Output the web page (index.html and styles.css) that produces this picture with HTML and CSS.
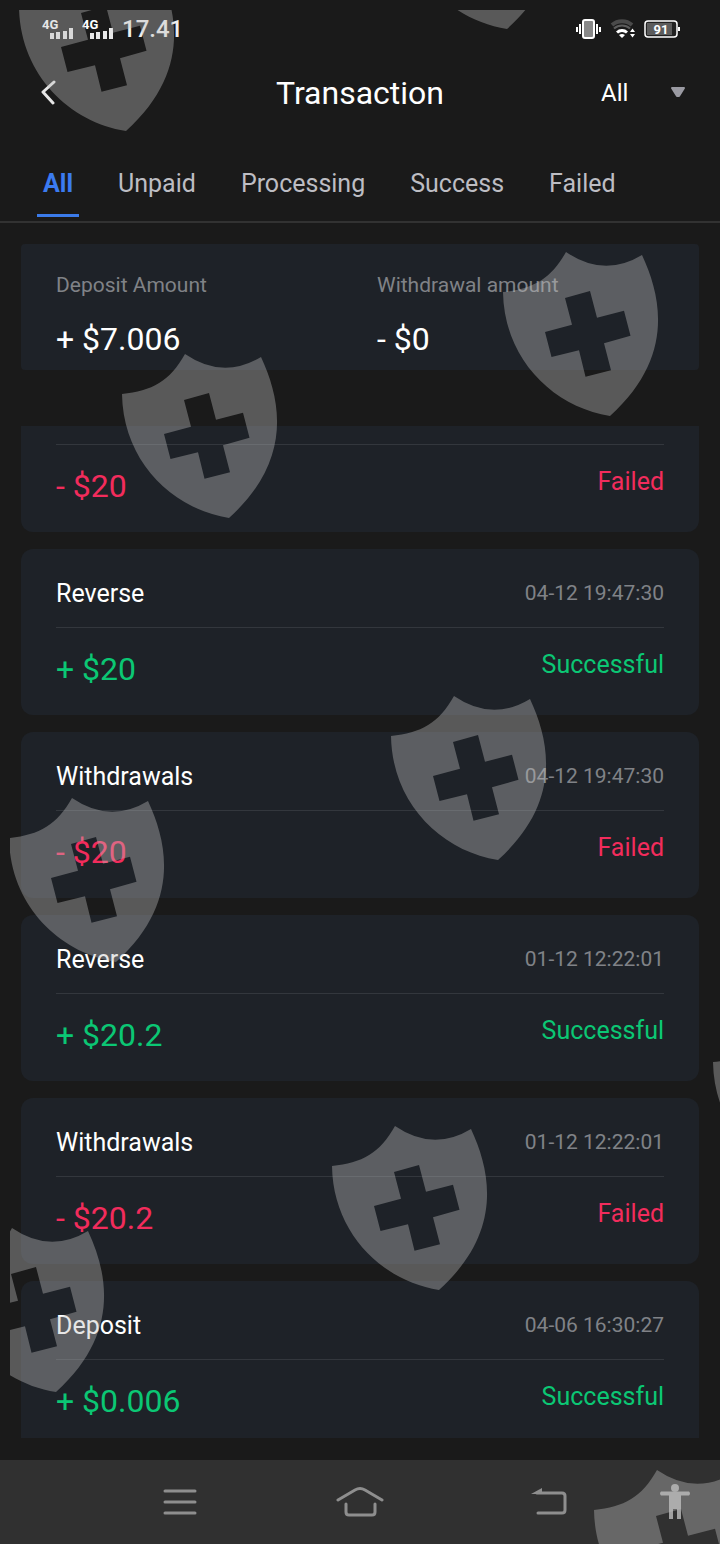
FILE: index.html
```html
<!DOCTYPE html>
<html lang="en">
  <head>
    <meta charset="utf-8">
    <meta name="viewport" content="width=device-width, initial-scale=1.0">
    <title>Transaction</title>
    <link rel="stylesheet" href="styles.css">
  </head>
  <body>
    <div class="status-bar">
      <svg class="signal" viewBox="0 0 32 24" width="32" height="24">
        <text x="0" y="12">4G</text>
        <path d="M10 16v6M16 15v7M23 14v8M29 11v11"/>
      </svg>
      <svg class="signal" viewBox="0 0 32 24" width="32" height="24">
        <text x="0" y="12">4G</text>
        <path d="M10 16v6M16 15v7M23 14v8M29 11v11"/>
      </svg>
      <span class="clock">17.41</span>
      <svg class="vibrate" viewBox="0 0 26 20" width="26" height="20">
        <rect x="7" y="1" width="11" height="18" rx="2" fill="#888" stroke="#fff" stroke-width="2"/>
        <path d="M1 8v5M4 5v10M21 5v10M24 8v5" stroke="#fff" stroke-width="2"/>
      </svg>
      <svg class="wifi" viewBox="0 0 26 20" width="26" height="20">
        <path d="M2 6a15 15 0 0 1 20 0" stroke="#4a4a4a" stroke-width="4"/>
        <path d="M4 9.500a12 12 0 0 1 16 0" stroke="#5c5c5c" stroke-width="2"/>
        <path d="M7 13.500a7.500 7.500 0 0 1 10 0" stroke="#fff" stroke-width="3"/>
        <path d="M9 16q3-2 6 0l-3 3zM20 13l2.500-3.500L25 13zM20 15l2.500 3.500L25 15z" fill="#fff"/>
      </svg>
      <svg class="battery" viewBox="0 0 36 20" width="36" height="20">
        <rect x="1" y="2" width="32" height="16" rx="3" fill="#222" stroke="#fff" stroke-width="1.500"/>
        <rect x="3" y="4" width="25" height="12" fill="#5c5c5c"/>
        <path d="M35 8v4" stroke="#fff" stroke-width="2"/>
        <text x="17" y="15">91</text>
      </svg>
    </div>

    <header class="header">
      <button class="back" aria-label="Back">
        <svg viewBox="0 0 16 26" width="16" height="26"><path d="M13 2 2 12l10 11"/></svg>
      </button>
      <h1>Transaction</h1>
      <div class="filter">
        <select aria-label="Type">
          <option>All</option>
        </select>
        <svg viewBox="0 0 16 12" width="16" height="12"><path d="M2 1h12L9 9H7z"/></svg>
      </div>
    </header>

    <nav class="tabs">
      <button class="tab active">All</button>
      <button class="tab">Unpaid</button>
      <button class="tab">Processing</button>
      <button class="tab">Success</button>
      <button class="tab">Failed</button>
    </nav>

    <main>
      <section class="summary">
        <div>
          <p class="label">Deposit Amount</p>
          <p class="total">+ $7.006</p>
        </div>
        <div>
          <p class="label">Withdrawal amount</p>
          <p class="total">- $0</p>
        </div>
      </section>

      <section class="list">
        <article class="card cut-top">
          <div class="foot minus"><span class="amount">- $20</span><span class="state">Failed</span></div>
        </article>
        <article class="card">
          <div class="head"><h2>Reverse</h2><time>04-12 19:47:30</time></div>
          <div class="foot plus"><span class="amount">+ $20</span><span class="state">Successful</span></div>
        </article>
        <article class="card">
          <div class="head"><h2>Withdrawals</h2><time>04-12 19:47:30</time></div>
          <div class="foot minus"><span class="amount">- $20</span><span class="state">Failed</span></div>
        </article>
        <article class="card">
          <div class="head"><h2>Reverse</h2><time>01-12 12:22:01</time></div>
          <div class="foot plus"><span class="amount">+ $20.2</span><span class="state">Successful</span></div>
        </article>
        <article class="card">
          <div class="head"><h2>Withdrawals</h2><time>01-12 12:22:01</time></div>
          <div class="foot minus"><span class="amount">- $20.2</span><span class="state">Failed</span></div>
        </article>
        <article class="card cut-bottom">
          <div class="head"><h2>Deposit</h2><time>04-06 16:30:27</time></div>
          <div class="foot plus"><span class="amount">+ $0.006</span><span class="state">Successful</span></div>
        </article>
      </section>
    </main>

    <nav class="system-nav">
      <button aria-label="Recent apps">
        <svg viewBox="0 0 34 28" width="34" height="28"><path d="M2 3h30M2 14h30M2 25h30"/></svg>
      </button>
      <button aria-label="Home">
        <svg viewBox="0 0 48 32" width="48" height="32"><path d="M2 14 19 4q5-3 10 0l17 10M10 18v8q0 3 3 3h23q3 0 3-3v-8"/></svg>
      </button>
      <button aria-label="Back">
        <svg viewBox="0 0 36 28" width="36" height="28"><path d="M6 5h25q3 0 3 3v14q0 3-3 3H7"/><path class="solid" d="M0 6 11 0v6z"/></svg>
      </button>
      <button aria-label="Accessibility">
        <svg viewBox="0 0 32 36" width="32" height="36"><circle class="solid bright" cx="16" cy="4" r="4"/><path class="solid bright" d="M2 7.500h28q2 2 0 4h-8V35h-4V25h-4v10h-4V11.500H2q-2-2 0-4z"/></svg>
      </button>
    </nav>

    <!-- shield watermark over the whole screen -->
    <svg class="watermark" aria-hidden="true">
      <defs>
        <path id="shield" fill-rule="evenodd" d="M0 40C30 37 48 27 63 0Q101 26 139 3C160 48 170 107 107 164C50 155 1 107 0 40ZM62 46L87 39L94 65.700L121 58.700L127.500 83.700L101 91.300L108 118.300L82.500 124.700L76 98.300L48.500 105L42 80L69 72.700Z"/>
      </defs>
      <use href="#shield" x="9" y="-43"/>
      <use href="#shield" x="390" y="-145"/>
      <use href="#shield" x="493" y="242"/>
      <use href="#shield" x="112" y="344"/>
      <use href="#shield" x="381" y="686"/>
      <use href="#shield" x="-1" y="788"/>
      <use href="#shield" x="703" y="1012"/>
      <use href="#shield" x="322" y="1116"/>
      <use href="#shield" x="-61" y="1218"/>
      <use href="#shield" x="584" y="1460"/>
    </svg>
  </body>
</html>
```
FILE: styles.css
```css
* {
  box-sizing: border-box;
}
body {
  position: relative;
  display: flex;
  flex-direction: column;
  min-height: 100vh;
  margin: 0;
  background-color: #1a1a1a;
  color: #fff;
  font-family: Roboto, "Liberation Sans", sans-serif;
  font-size: 25px;
}
h1, h2, p {
  margin: 0;
  font-weight: 400;
}
button, select {
  padding: 0;
  border: 0;
  background: none;
  color: inherit;
  font: inherit;
  cursor: pointer;
}
svg {
  display: block;
  fill: none;
}

.status-bar {
  display: flex;
  align-items: center;
  gap: 8px;
  height: 57px;
  padding: 0 40px 0 42px;
}
.signal path {
  stroke: #e8e8e8;
  stroke-width: 4;
}
.signal text {
  fill: #fff;
  font-size: 13px;
  font-weight: 700;
}
.clock {
  font-size: 24px;
  font-weight: 500;
  color: #eee;
}
.vibrate {
  margin-left: auto;
}
.battery text {
  fill: #fff;
  font-size: 13px;
  font-weight: 700;
  text-anchor: middle;
}

.header {
  display: grid;
  grid-template-columns: 1fr auto 1fr;
  align-items: center;
  height: 71px;
  padding: 0 34px;
}
.back {
  padding-left: 7px;
  justify-self: start;
}
.back path {
  stroke: #e6e6e6;
  stroke-width: 3;
  stroke-linecap: round;
  stroke-linejoin: round;
}
.header h1 {
  font-size: 32px;
}
.filter {
  display: flex;
  align-items: center;
  justify-content: flex-end;
}
.filter select {
  width: 69px;
  appearance: none;
  font-size: 24px;
}
.filter path {
  fill: #9a9aa2;
  stroke: #9a9aa2;
  stroke-width: 2;
  stroke-linejoin: round;
}

.tabs {
  display: flex;
  gap: 33px;
  height: 95px;
  padding: 22px 37px 4px;
  border-bottom: 2px solid #323232;
}
.tab {
  padding: 3px 6px 0;
  border-bottom: 3px solid transparent;
  color: #bdbdc3;
}
.tab.active {
  border-color: #3b7bea;
  color: #3b7bf0;
  font-weight: 700;
}

main {
  flex: 1;
  padding: 21px 21px 22px;
}
.summary {
  display: grid;
  grid-template-columns: 1fr 1fr;
  gap: 34px;
  height: 126px;
  padding: 24px 35px 0;
  border-radius: 4px;
  background-color: #1e2228;
}
.label {
  color: #808287;
  font-size: 21px;
  line-height: 34px;
}
.total {
  padding-top: 13px;
  font-size: 32px;
  line-height: 48px;
}

.list {
  display: flex;
  flex-direction: column;
  gap: 17px;
  margin-top: 56px;
}
.card {
  padding: 0 35px;
  border-radius: 12px;
  background-color: #1e2228;
}
.head {
  display: flex;
  align-items: center;
  justify-content: space-between;
  height: 78px;
  padding-top: 10px;
}
.head h2 {
  font-size: 25px;
}
.head time {
  color: #808287;
  font-size: 21px;
}
.foot {
  display: flex;
  justify-content: space-between;
  height: 88px;
  padding-top: 17px;
  border-top: 1px solid #33373d;
}
.amount {
  font-size: 32px;
  line-height: 48px;
}
.state {
  line-height: 40px;
}
.plus {
  color: #0bc774;
}
.minus {
  color: #f22c5c;
}
/* cards scrolled partly out of the list */
.cut-top {
  padding-top: 18px;
  border-radius: 0 0 12px 12px;
}
.cut-bottom {
  border-radius: 12px 12px 0 0;
}
.cut-bottom .foot {
  height: 79px;
}

.system-nav {
  display: grid;
  grid-template-columns: 10fr 10fr 11fr 3fr;
  place-items: center;
  height: 84px;
  padding: 0 18px 0 90px;
  background-color: #303030;
}
.system-nav path {
  stroke: #8e8e8e;
  stroke-width: 3;
  stroke-linecap: round;
}
.system-nav .solid {
  fill: #8e8e8e;
  stroke: none;
}
.system-nav .bright {
  fill: #a0a0a0;
}

.watermark {
  position: absolute;
  top: 10px;
  left: 10px;
  width: calc(100% - 10px);
  height: calc(100% - 10px);
  overflow: hidden;
  fill: #c0c0c0;
  opacity: 0.38;
  pointer-events: none;
}
```
